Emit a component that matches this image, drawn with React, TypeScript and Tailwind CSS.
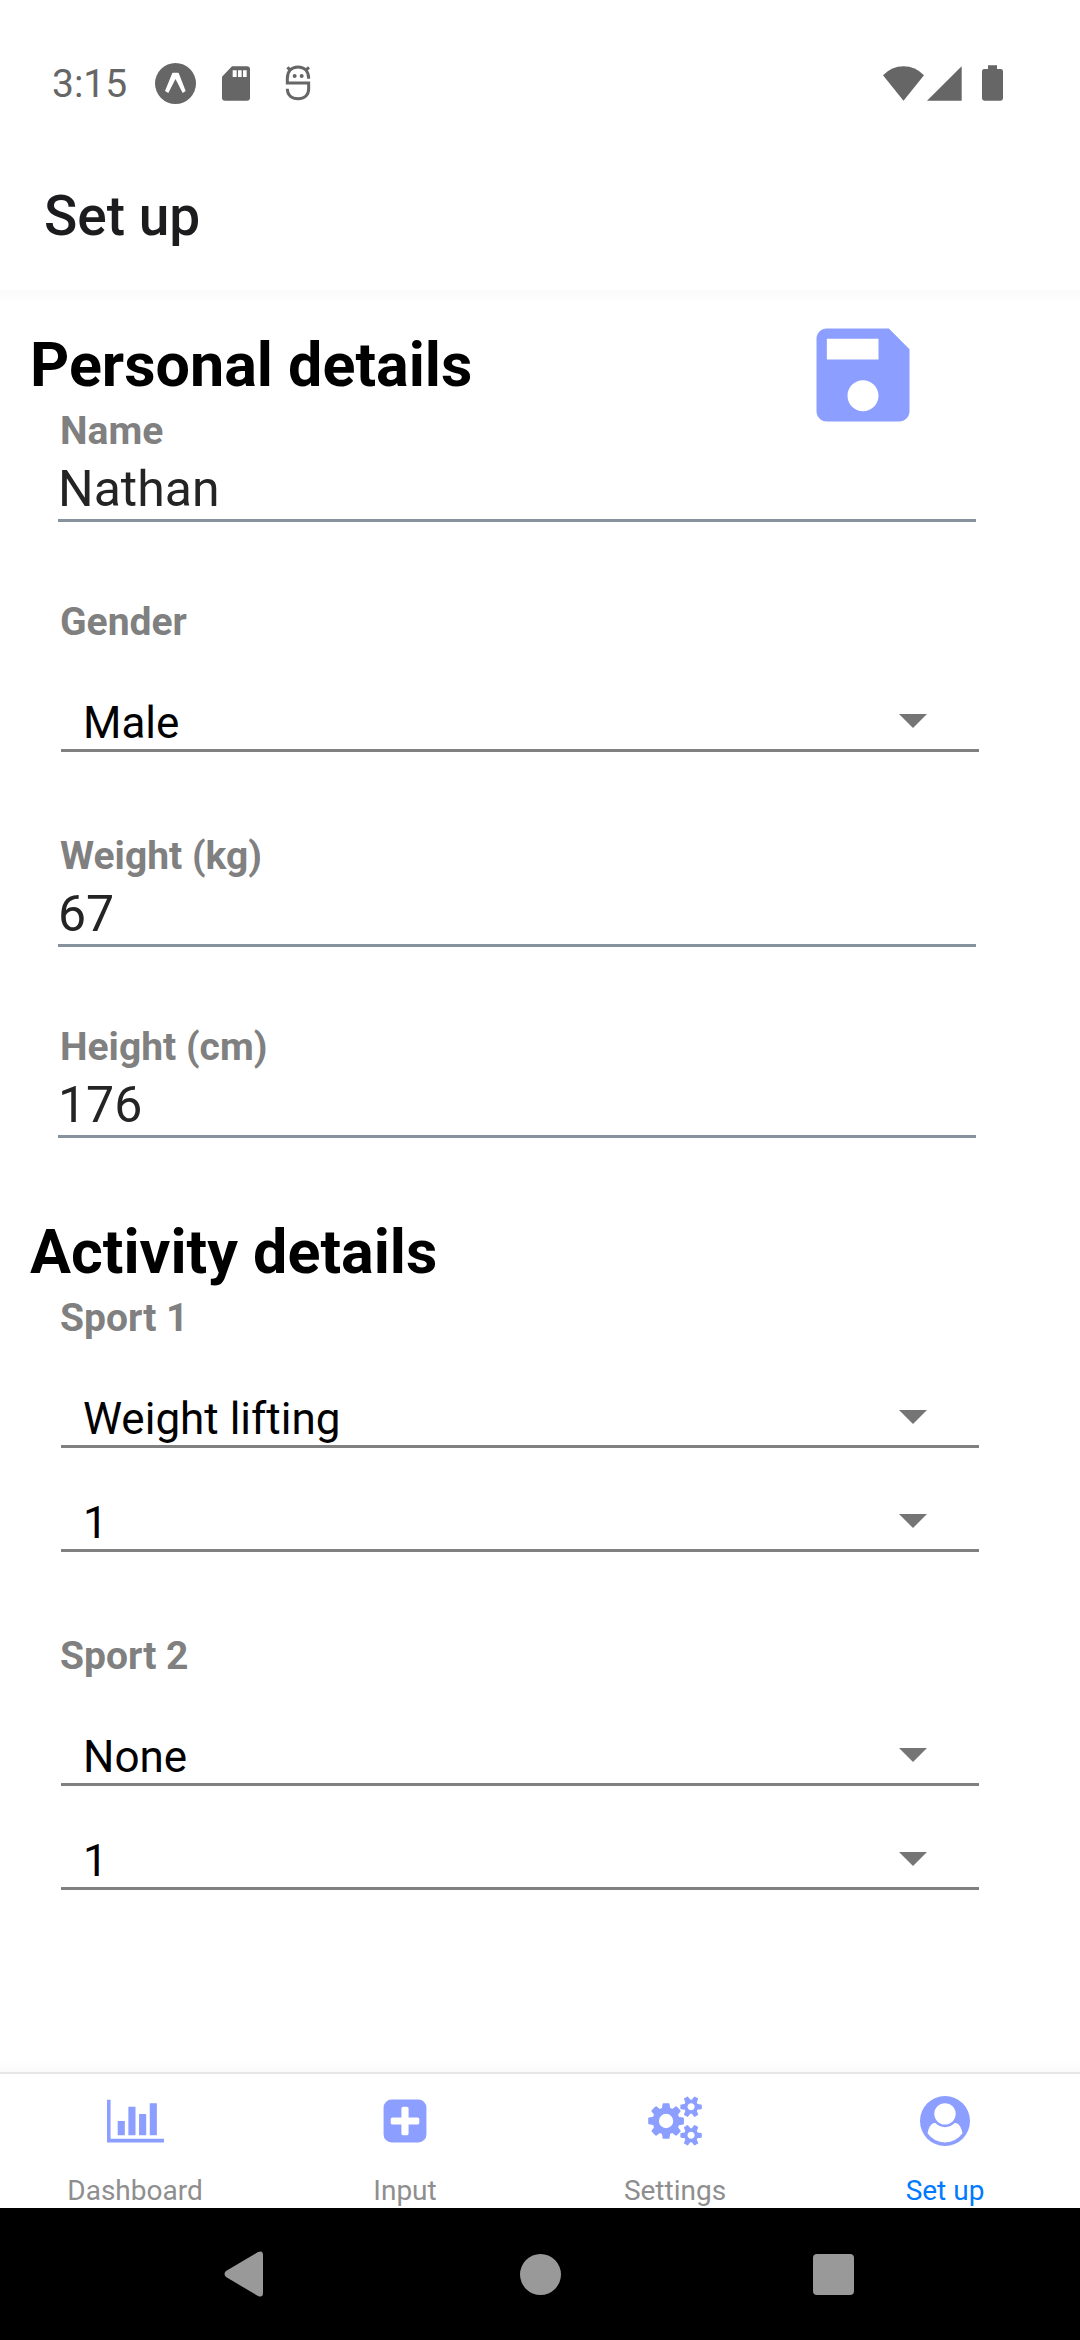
import { useState } from "react";
import type { ReactNode } from "react";

const COGS =
  "M896 896q0-106-75-181t-181-75-181 75-75 181 75 181 181 75 181-75 75-181zm768 512q0-52-38-90t-90-38-90 38-38 90q0 53 37.5 90.5t90.5 37.5 90.5-37.5 37.5-90.5zm0-1024q0-52-38-90t-90-38-90 38-38 90q0 53 37.5 90.5t90.5 37.5 90.5-37.5 37.5-90.5zm-384 421v185q0 10-7 19.5t-16 10.5l-155 24q-11 35-32 76 34 48 90 115 7 11 7 20 0 12-7 19-23 30-82.5 89.5t-78.5 59.5q-11 0-21-7l-115-90q-37 19-77 31-11 108-23 155-7 24-30 24h-186q-11 0-20-7.5t-10-17.5l-23-153q-34-10-75-31l-118 89q-7 7-20 7-11 0-21-8-144-133-144-160 0-9 7-19 10-14 41-53t47-61q-23-44-35-82l-152-24q-10-1-17-9.5t-7-19.5v-185q0-10 7-19.5t16-10.5l155-24q11-35 32-76-34-48-90-115-7-11-7-20 0-12 7-20 22-30 82-89t79-59q11 0 21 7l115 90q34-18 77-32 11-108 23-154 7-24 30-24h186q11 0 20 7.5t10 17.5l23 153q34 10 75 31l118-89q8-7 20-7 11 0 21 8 144 133 144 160 0 8-7 19-12 16-42 54t-45 60q23 48 34 82l152 23q10 2 17 10.5t7 19.5zm640 533v140q0 16-149 31-12 27-30 52 51 113 51 138 0 4-4 7-122 71-124 71-8 0-46-47t-52-68q-20 2-30 2t-30-2q-14 21-52 68t-46 47q-2 0-124-71-4-3-4-7 0-25 51-138-18-25-30-52-149-15-149-31v-140q0-16 149-31 13-29 30-52-51-113-51-138 0-4 4-7 4-2 35-20t59-34 30-16q8 0 46 46.5t52 67.5q20-2 30-2t30 2q51-71 92-112l6-2q4 0 124 70 4 3 4 7 0 25-51 138 17 23 30 52 149 15 149 31zm0-1024v140q0 16-149 31-12 27-30 52 51 113 51 138 0 4-4 7-122 71-124 71-8 0-46-47t-52-68q-20 2-30 2t-30-2q-14 21-52 68t-46 47q-2 0-124-71-4-3-4-7 0-25 51-138-18-25-30-52-149-15-149-31v-140q0-16 149-31 13-29 30-52-51-113-51-138 0-4 4-7 4-2 35-20t59-34 30-16q8 0 46 46.5t52 67.5q20-2 30-2t30 2q51-71 92-112l6-2q4 0 124 70 4 3 4 7 0 25-51 138 17 23 30 52 149 15 149 31z";
const BAR_CHART =
  "M640 896v512h-256v-512h256zm384-512v1024h-256v-1024h256zm1024 1152v128h-2048v-1536h128v1408h1920zm-640-896v768h-256v-768h256zm384-384v1152h-256v-1152h256z";
const PLUS_SQUARE =
  "M1408 960v-128q0-26-19-45t-45-19h-320v-320q0-26-19-45t-45-19h-128q-26 0-45 19t-19 45v320h-320q-26 0-45 19t-19 45v128q0 26 19 45t45 19h320v320q0 26 19 45t45 19h128q26 0 45-19t19-45v-320h320q26 0 45-19t19-45zm256-544v960q0 119-84.5 203.5t-203.5 84.5h-960q-119 0-203.5-84.5t-84.5-203.5v-960q0-119 84.5-203.5t203.5-84.5h960q119 0 203.5 84.5t84.5 203.5z";
const USER_CIRCLE =
  "M1523 1339q-22-155-87.5-257.5t-184.5-118.5q-67 74-159.5 115.5t-195.5 41.5-195.5-41.5-159.5-115.5q-119 16-184.5 118.5t-87.5 257.5q106 150 271 237.5t356 87.5 356-87.5 271-237.5zm-243-699q0-159-112.5-271.5t-271.5-112.5-271.5 112.5-112.5 271.5 112.5 271.5 271.5 112.5 271.5-112.5 112.5-271.5zm512 256q0 182-71 347.5t-190.5 286-285.5 191.5-349 71q-182 0-348-71t-286-191-191-286-71-348 71-348 191-286 286-191 348-71 348 71 286 191 191 286 71 348z";

const TABS = [
  { name: "Dashboard", path: BAR_CHART, box: "0 0 2048 1792", size: "w-[57px] h-[50px]" },
  { name: "Input", path: PLUS_SQUARE, box: "0 0 1792 1792", size: "w-[50px] h-[50px]" },
  { name: "Settings", path: COGS, box: "0 0 1920 1792", size: "w-[54px] h-[50px]" },
  { name: "Set up", path: USER_CIRCLE, box: "0 0 1792 1792", size: "w-[50px] h-[50px]" },
];

const HOURS = ["1", "2", "3", "4", "5"];
const SPORTS = ["None", "Weight lifting", "Running", "Cycling", "Swimming"];

function StatusBar() {
  return (
    <div className="flex h-[142px] items-center justify-between pt-6 pr-[77px] pl-[52px] text-[#666666]">
      <div className="flex items-center">
        <span className="pt-0.5 text-[39px] leading-[48px]">3:15</span>
        <svg className="ml-7 h-[41px] w-[41px]" viewBox="0 0 123 123" fill="currentColor" aria-hidden="true">
          <circle cx="61.5" cy="61.5" r="61.5" />
          <path d="M52 30Q53 29 55 29H68Q70 29 71 30L92 84 83 90 61.500 48 40 90 30 84z" fill="#fff" />
        </svg>
        <svg className="ml-[26px] h-[35px] w-7" viewBox="0 0 84 105" fill="currentColor" fillRule="evenodd" aria-hidden="true">
          <path d="M30 1H75Q84 1 84 10V95Q84 104 75 104H9Q0 104 0 95V32zM32 13V33H44V13zM48 13V33H59V13zM63 13V33H74V13z" />
        </svg>
        <svg className="ml-[35px] h-9 w-[26px]" viewBox="856 76 78 108" fill="none" stroke="currentColor" aria-hidden="true">
          <path
            d="M927 117C927 95 915 82 895 82S863 95 863 117V130H927V147C927 166 914 177 895 177S863 166 863 147"
            strokeWidth="9"
          />
          <path d="M863 83L874 93M928 83L917 93" strokeWidth="9" />
          <circle cx="885" cy="109" r="6" fill="currentColor" stroke="none" />
          <circle cx="906" cy="109" r="6" fill="currentColor" stroke="none" />
        </svg>
      </div>
      <div className="flex items-center">
        <svg className="h-[35px] w-[41px]" viewBox="0 0 123 105" fill="currentColor" aria-hidden="true">
          <path d="M0 28Q26 1 61.500 1T123 28L61.500 104z" />
        </svg>
        <svg className="ml-[3px] h-[35px] w-[35px]" viewBox="0 0 105 105" fill="currentColor" aria-hidden="true">
          <path d="M104 1V104H0z" />
        </svg>
        <svg className="ml-5 h-9 w-[21px]" viewBox="0 0 63 108" fill="currentColor" aria-hidden="true">
          <path d="M18 1H45V12H56Q63 12 63 19V100Q63 107 56 107H7Q0 107 0 100V19Q0 12 7 12H18z" />
        </svg>
      </div>
    </div>
  );
}

function Label({ id, children }: { id: string; children: ReactNode }) {
  return (
    <label htmlFor={id} className="block pl-0.5 text-[39px] leading-[52px] font-bold text-[#808080]">
      {children}
    </label>
  );
}

function TextBox({ id, initial }: { id: string; initial: string }) {
  const [value, setValue] = useState(initial);
  return (
    <input
      id={id}
      value={value}
      onChange={(e) => setValue(e.target.value)}
      className="block h-[65px] w-full border-b-[3px] border-[#86939e] bg-transparent pt-0.5 text-[50px] leading-[60px] text-[#242424] outline-none"
    />
  );
}

function Picker({ id, options, initial, name }: { id?: string; options: string[]; initial: string; name?: string }) {
  const [value, setValue] = useState(initial);
  return (
    <div className="relative ml-[3px] w-full">
      <select
        id={id}
        aria-label={name}
        value={value}
        onChange={(e) => setValue(e.target.value)}
        className="block h-[104px] w-full appearance-none border-b-[3px] border-[#808080] bg-transparent pt-12 pl-[22px] text-[44px] leading-[52px] text-black outline-none"
      >
        {options.map((o) => (
          <option key={o}>{o}</option>
        ))}
      </select>
      <svg
        className="pointer-events-none absolute right-[52px] bottom-6 h-3.5 w-7"
        viewBox="0 0 28 14"
        fill="#757575"
        aria-hidden="true"
      >
        <path d="M0 0H28L14 14z" />
      </svg>
    </div>
  );
}

function Heading({ children }: { children: ReactNode }) {
  return <h2 className="text-[61px] leading-[80px] font-bold text-black">{children}</h2>;
}

export default function App() {
  const [active, setActive] = useState("Set up");
  return (
    <div className="flex min-h-screen flex-col bg-white font-[Roboto,sans-serif]">
      <header>
        <StatusBar />
        <div className="flex h-[148px] items-center pl-11">
          <h1 className="text-[55px] leading-[66px] font-medium text-[#1c1c1e]">Set up</h1>
        </div>
        <div className="h-3 bg-linear-to-b from-[#fafafa] to-white" />
      </header>

      <main className="flex-1 pt-[11px] pb-20">
        <form onSubmit={(e) => e.preventDefault()}>
          <section>
            <div className="flex items-start justify-between">
              <div className="pt-3">
                <div className="pl-[30px]">
                  <Heading>Personal details</Heading>
                </div>
                <div className="pl-[58px]">
                  <Label id="name">Name</Label>
                </div>
              </div>
              <button type="submit" aria-label="Save" className="mr-[155px]">
                <svg className="h-[124px] w-[124px]" viewBox="0 0 24 24" fill="#8c9eff" aria-hidden="true">
                  <path d="M17 3H5c-1.110 0-2 .9-2 2v14c0 1.100.89 2 2 2h14c1.100 0 2-.9 2-2V7l-4-4zm-5 16c-1.660 0-3-1.340-3-3s1.340-3 3-3 3 1.340 3 3-1.340 3-3 3zm3-10H5V5h10v4z" />
                </svg>
              </button>
            </div>
            <div className="ml-[58px] w-[85%]">
              <TextBox id="name" initial="Nathan" />
              <div className="mt-[74px]">
                <Label id="gender">Gender</Label>
                <Picker id="gender" options={["Male", "Female"]} initial="Male" />
              </div>
              <div className="mt-[78px]">
                <Label id="weight">Weight (kg)</Label>
                <TextBox id="weight" initial="67" />
              </div>
              <div className="mt-[74px]">
                <Label id="height">Height (cm)</Label>
                <TextBox id="height" initial="176" />
              </div>
            </div>
          </section>

          <section className="mt-[74px]">
            <div className="pl-[30px]">
              <Heading>Activity details</Heading>
            </div>
            <div className="ml-[58px] w-[85%]">
              <Label id="sport1">Sport 1</Label>
              <Picker id="sport1" options={SPORTS} initial="Weight lifting" />
              <Picker options={HOURS} initial="1" name="Sport 1 sessions" />
              <div className="mt-[78px]">
                <Label id="sport2">Sport 2</Label>
                <Picker id="sport2" options={SPORTS} initial="None" />
                <Picker options={HOURS} initial="1" name="Sport 2 sessions" />
              </div>
            </div>
          </section>
        </form>
      </main>

      <div className="h-3 bg-linear-to-b from-white to-[#fafafa]" />
      <nav className="grid h-[136px] grid-cols-4 border-t-2 border-[#e6e6e6] bg-white">
        {TABS.map((t) => (
          <button
            key={t.name}
            type="button"
            onClick={() => setActive(t.name)}
            className="flex flex-col items-center justify-between pt-[22px]"
          >
            <svg className={t.size} viewBox={t.box} fill="#8c9eff" aria-hidden="true">
              <path d={t.path} />
            </svg>
            <span
              className={
                active === t.name ? "text-[28px] leading-[34px] text-[#007aff]" : "text-[28px] leading-[34px] text-[#8e8e8f]"
              }
            >
              {t.name}
            </span>
          </button>
        ))}
      </nav>

      <footer className="flex h-[132px] items-center justify-between bg-black pr-[226px] pl-[224px] text-[#999999]">
        <button type="button" aria-label="Back" className="w-[43px]">
          <svg className="h-[46px] w-10" viewBox="0 0 40 46" fill="currentColor" aria-hidden="true">
            <path d="M34 1Q39-1 39 4V42Q39 47 34 45L2 26Q-1 23 2 20z" />
          </svg>
        </button>
        <button type="button" aria-label="Home" className="h-[41px] w-[41px] rounded-full bg-[#999999]" />
        <button type="button" aria-label="Recent apps" className="h-[41px] w-[41px] rounded bg-[#999999]" />
      </footer>
    </div>
  );
}
